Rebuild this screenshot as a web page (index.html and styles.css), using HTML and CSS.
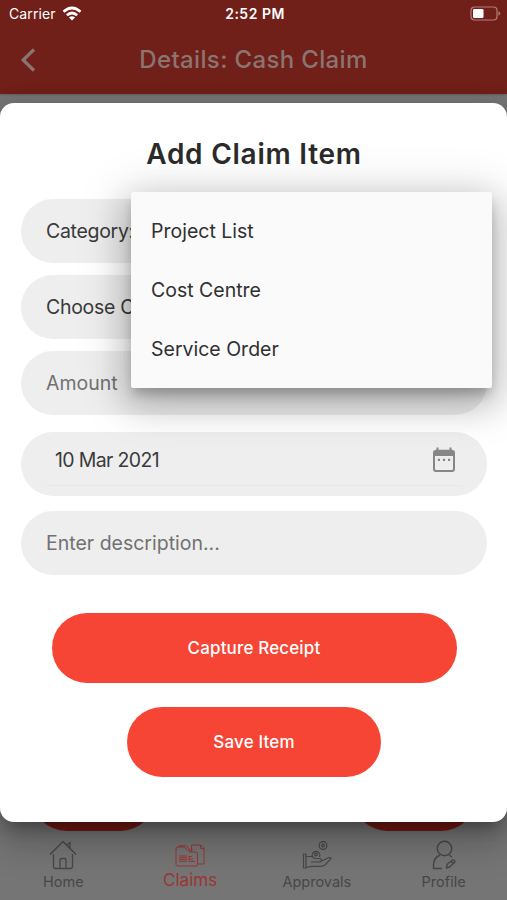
FILE: index.html
```html
<!DOCTYPE html>
<html lang="en">
<head>
<meta charset="utf-8">
<title>Cash Claim</title>
<link rel="stylesheet" href="styles.css">
</head>
<body>
<div class="screen">
  <div class="page">
    <header class="header">
      <div class="appbar">
        <svg class="back" width="16" height="26" viewBox="0 0 16 26"><path d="M14 2.500 3.200 13 14 23.500" fill="none" stroke="currentColor" stroke-width="3.200"/></svg>
        <h1>Details: Cash Claim</h1>
      </div>
    </header>
    <main class="content">
      <div class="pill"></div>
      <div class="pill"></div>
    </main>
    <nav class="tabs">
      <a class="tab">
        <svg width="30" height="30" viewBox="0 0 30 30"><g fill="none" stroke="currentColor" stroke-width="1.300" stroke-linejoin="round"><path d="M2 14.500 15 1.500l13 13M5.500 14v12.500q0 2 2 2h15q2 0 2-2V14M12 28.500V20q0-1.500 1.500-1.500h3q1.500 0 1.500 1.500v8.500M19 5l3-2.500V9"/></g></svg>
        <span>Home</span>
      </a>
      <a class="tab active">
        <svg width="30" height="24" viewBox="0 0 30 24"><g fill="none" stroke="currentColor" stroke-width="1" stroke-linejoin="round"><path d="M1 20.500V5q0-2 2-2h6l4.500 4L18 5.500M3 22h18q1.500 0 1.500-1.500V10q0-2-2-2H14M3 22q-2 0-2-1.500M4 3V1.800h7l4 3.700M16.500 5V1h9L29 4.500V20h-6.500M25.500 1v3.500H29M16.500 5v3"/><path d="M4 12h8M4 13.800h8M4 15.600h8M4 17.400h8M14 12.500h3M14 15h4M14 17.400h6M14 12v5.400"/></g></svg>
        <span>Claims</span>
      </a>
      <a class="tab">
        <svg width="30" height="30" viewBox="0 0 30 30"><g fill="none" stroke="currentColor" stroke-width="1.200" stroke-linejoin="round"><circle cx="21" cy="5.500" r="3.900"/><circle cx="21" cy="5.500" r="1.300"/><path d="M10.500 17a3.900 3.900 0 1 1 7 0"/><circle cx="14" cy="14.500" r="1.300"/><path d="M1.500 14H4v14H1.500ZM4 16.500h5q2 0 4 2h4q2.500 0 2.500 1.700T17 22H9M19.500 21l7.500-3.500q2.500 0 2 1.200L23 25q-1.500 1.300-4 1.300H9L4 27.500"/></g></svg>
        <span>Approvals</span>
      </a>
      <a class="tab">
        <svg width="30" height="30" viewBox="0 0 30 30"><g fill="none" stroke="currentColor" stroke-width="1.400" stroke-linejoin="round"><circle cx="15.500" cy="8.500" r="7.200"/><path d="M11 15Q4.500 18 4.500 25v3.500H13M20 15l3 2M17.500 28l.5-3.500 5.500-4.500q2-.5 2.500 2L20.500 27ZM22 21.500l2 2"/></g></svg>
        <span>Profile</span>
      </a>
    </nav>
  </div>

  <div class="status">
    <div class="carrier">
      <span>Carrier</span>
      <svg width="20" height="15" viewBox="0 0 20 15"><g fill="none" stroke="#fff" stroke-width="2.800"><path d="M1.500 5.800Q10-1.900 18.500 5.800M4.900 9.200q5.100-4.500 10.200 0"/></g><path d="M7 11.400q3-2.300 6 0L10 14.400Z" fill="#fff"/></svg>
    </div>
    <div class="clock">2:52 PM</div>
    <div class="battery"><svg width="31" height="16" viewBox="0 0 31 16"><rect x="1" y="1" width="26" height="13" rx="3.500" fill="none" stroke="#b47f7a" stroke-width="1.200"/><rect x="3" y="3" width="10.500" height="9" rx="1.300" fill="#fff"/><path d="M28.500 5.200q1.800.8 1.800 2.300t-1.800 2.300Z" fill="#b47f7a"/></svg></div>
  </div>

  <section class="dialog">
    <h2>Add Claim Item</h2>
    <div class="field category"><span>Category:</span></div>
    <div class="field choose"><span>Choose C</span></div>
    <div class="field amount hint"><span>Amount</span></div>
    <div class="field date">
      <div class="date-inner">
        <span>10 Mar 2021</span>
        <svg width="24" height="26" viewBox="0 0 24 26"><path fill="#868686" fill-rule="evenodd" d="M4.500.5H6.500v2.200h11V.5h2v2.200q3.500 0 3.500 3V22q0 3-3 3H4Q1 25 1 22V5.700q0-3 3.500-3ZM3 9v13q0 1 1 1h16q1 0 1-1V9Z"/><path fill="#868686" d="M5.800 11.800H8V14H5.800Zm5.100 0h2.200V14h-2.200Zm5.100 0h2.200V14H16Z"/></svg>
      </div>
    </div>
    <div class="field desc hint"><span>Enter description...</span></div>
    <button class="btn capture">Capture Receipt</button>
    <button class="btn save">Save Item</button>
  </section>

  <div class="menu">
    <div class="option">Project List</div>
    <div class="option">Cost Centre</div>
    <div class="option">Service Order</div>
  </div>
</div>
</body>
</html>
```

FILE: styles.css
```css
* { box-sizing: border-box; }
body { margin: 0; font-family: Inter, "Liberation Sans", sans-serif; }
h1, h2 { margin: 0; }
span { white-space: nowrap; }
.screen { position: relative; width: 507px; height: 900px; overflow: hidden; }
.page { display: flex; flex-direction: column; height: 100%; background: #757575; }
.header { height: 94px; padding-top: 27px; background: #701f19; box-shadow: 0 1px 2px rgba(0,0,0,.2); }
.status { position: absolute; inset: 0 0 auto; display: grid; grid-template-columns: 1fr 1fr 1fr; align-items: center; height: 27px; padding: 0 6px 0 9px; color: #fff; font-size: 14px; }
.carrier { display: flex; align-items: center; gap: 6px; letter-spacing: .1px; }
.clock { text-align: center; font-weight: 600; letter-spacing: .5px; }
.battery { display: flex; justify-content: flex-end; }
.appbar { display: grid; grid-template-columns: 40px 1fr 40px; align-items: center; height: 66px; padding: 0 20px; color: #8b7570; }
.appbar h1 { text-align: center; font-size: 24px; font-weight: 500; line-height: 30px; letter-spacing: .35px; }
.content { flex: 1; display: flex; align-items: flex-end; justify-content: space-between; padding: 0 31px 0 32px; }
.pill { width: 123px; height: 69px; border-radius: 35px; background: #751b14; }
.tabs { display: flex; height: 69px; color: #474747; }
.tab { flex: 1; display: flex; flex-direction: column; align-items: center; padding-top: 9px; gap: 2.500px; font-size: 14.500px; line-height: 18px; }
.tab.active { padding-top: 13px; gap: 2px; color: #9b3534; font-size: 17px; line-height: 20px; }
.dialog { position: absolute; top: 103px; left: 0; width: 507px; height: 719px; padding: 32px 20px 0 21px; display: flex; flex-direction: column; background: #fff; border-radius: 14px; box-shadow: 0 11px 15px -7px rgba(0,0,0,.3), 0 20px 36px 3px rgba(0,0,0,.2), 0 4px 26px 4px rgba(0,0,0,.08); }
.dialog h2 { height: 64px; text-align: center; font-size: 28px; font-weight: 600; line-height: 39px; letter-spacing: .75px; color: #2b2b2b; }
.field { display: flex; align-items: center; height: 64px; padding: 0 25px; border-radius: 32px; background: #eee; color: #3a3a3a; font-size: 19.500px; line-height: 26px; }
.category, .choose { letter-spacing: -.3px; }
.choose, .amount { margin-top: 12px; }
.hint { color: #717171; }
.date { align-items: flex-start; margin-top: 17px; letter-spacing: -.65px; }
.date-inner { flex: 1; display: flex; align-items: center; justify-content: space-between; height: 54px; padding: 2px 6px 0 9px; border-bottom: 1px solid #e7e7e7; }
.desc { margin-top: 15px; }
.btn { align-self: center; height: 70px; padding: 0; border: 0; border-radius: 35px; background: #f64435; color: #fff; font: 500 17px/22px Inter, sans-serif; letter-spacing: .15px; }
.capture { width: 405px; margin-top: 38px; }
.save { width: 254px; margin-top: 24px; }
.menu { position: absolute; top: 192px; left: 131px; width: 361px; height: 196px; padding: 10px 20px; background: #fafafa; border-radius: 2px; box-shadow: 0 8px 10px -2px rgba(0,0,0,.2), 0 13px 32px 4px rgba(0,0,0,.18), 0 8px 48px 8px rgba(0,0,0,.15); }
.option { display: flex; align-items: center; height: 58.670px; color: #303030; font-size: 19.500px; }
```
